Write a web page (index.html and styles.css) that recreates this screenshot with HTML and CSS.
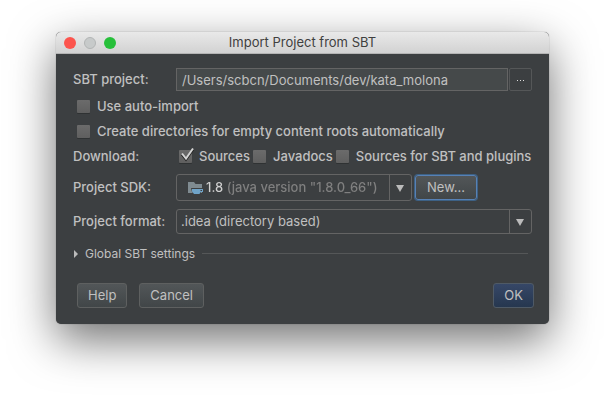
FILE: index.html
```html
<!DOCTYPE html>
<html lang="en">
<head>
    <meta charset="UTF-8">
    <meta name="viewport" content="width=device-width, initial-scale=1.0">
    <title>Import Project from SBT</title>
    <link rel="stylesheet" href="styles.css">
</head>
<body>
    <main class="dialog">
        <!-- Title bar -->
        <header class="titlebar">
            <div class="lights">
                <span class="light close"></span>
                <span class="light minimize"></span>
                <span class="light zoom"></span>
            </div>
            <h1>Import Project from SBT</h1>
        </header>

        <form class="content">
            <div class="row">
                <label class="name" for="project">SBT project:</label>
                <div class="path">
                    <input type="text" id="project" class="path-input" value="/Users/scbcn/Documents/dev/kata_molona">
                    <button type="button" class="browse" aria-label="Browse">
                        <svg width="9" height="3" viewBox="0 0 9 3"><path d="M1 2h1v1H1zM4 2h1v1H4zM7 2h1v1H7z" fill="#ddd"/></svg>
                    </button>
                </div>
            </div>

            <div class="options">
                <label class="check"><input type="checkbox">Use auto-import</label>
                <label class="check"><input type="checkbox">Create directories for empty content roots automatically</label>
            </div>

            <div class="row">
                <span class="name">Download:</span>
                <div class="downloads">
                    <label class="check">
                        <input type="checkbox" checked>Sources
                        <svg class="tick" width="16" height="16" viewBox="0 0 16 16">
                            <path d="M3 7.500l4 5L14 2.500" fill="none" stroke="#222" stroke-width="2.500"/>
                            <path d="M3 6.500l4 5L14 1.500" fill="none" stroke="#d4d4d4" stroke-width="2"/>
                        </svg>
                    </label>
                    <label class="check"><input type="checkbox">Javadocs</label>
                    <label class="check"><input type="checkbox">Sources for SBT and plugins</label>
                </div>
            </div>

            <div class="row sdk-row">
                <label class="name" for="sdk">Project SDK:</label>
                <div class="sdk">
                    <div class="combo">
                        <svg class="folder" width="16" height="14" viewBox="0 0 16 14">
                            <path d="M0 1h6l1.500 2H14v9H0z" fill="#7f8b91"/>
                            <path d="M3 7h13v4h-3l-1 2H6l-2-2z" fill="#3c3f41"/>
                            <path d="M4 8h11v3h-2.500l-1 2h-5.500L4 10.500zM12.500 9v1H14V9z" fill="#6fa4c9" fill-rule="evenodd"/>
                        </svg>
                        <select id="sdk" class="sdk-select">
                            <option>1.8 (java version "1.8.0_66")</option>
                        </select>
                        <svg class="arrow" width="8" height="7" viewBox="0 0 8 7"><path d="M0 0h8L4 7z" fill="#bbb"/></svg>
                    </div>
                    <button type="button" class="button focused">New...</button>
                </div>
            </div>

            <div class="row format-row">
                <label class="name" for="format">Project format:</label>
                <div class="combo">
                    <select id="format">
                        <option>.idea (directory based)</option>
                    </select>
                    <svg class="arrow" width="8" height="7" viewBox="0 0 8 7"><path d="M0 0h8L4 7z" fill="#bbb"/></svg>
                </div>
            </div>

            <button type="button" class="settings">
                <svg width="4" height="8" viewBox="0 0 4 8"><path d="M0 0l4 4-4 4z" fill="#bbb"/></svg>
                <span>Global SBT settings</span>
            </button>

            <!-- Bottom buttons -->
            <footer class="actions">
                <button type="button" class="button">Help</button>
                <button type="button" class="button">Cancel</button>
                <button type="submit" class="button primary">OK</button>
            </footer>
        </form>
    </main>
</body>
</html>
```
FILE: styles.css
```css
* {
    box-sizing: border-box;
}

body {
    min-height: 100vh;
    margin: 0;
    padding: 32px 56px;
    background: #fff;
    color: #c0c0c0;
    font-family: Inter, "Liberation Sans", sans-serif;
    font-size: 13px;
    line-height: 17px;
}

/* Window */
.dialog {
    border-radius: 5px;
    background: #3c3f41;
    box-shadow: 0 0 1px rgba(0, 0, 0, 0.5), 0 16px 46px rgba(0, 0, 0, 0.56);
}

.titlebar {
    position: relative;
    display: flex;
    align-items: center;
    justify-content: center;
    height: 22px;
    border-bottom: 1px solid #b4b4b4;
    border-radius: 5px 5px 0 0;
    background: linear-gradient(#e9e9e9, #d2d2d2);
}

.titlebar h1 {
    margin: 0;
    color: #404040;
    font-size: 13px;
    font-weight: 400;
}

.lights {
    position: absolute;
    top: 5px;
    left: 8px;
    display: flex;
    gap: 8px;
}

.light {
    width: 12px;
    height: 12px;
    border-radius: 50%;
}

.close {
    background: #fc544d;
}

.minimize {
    border: 1px solid #b2b5b5;
    background: #c7caca;
}

.zoom {
    background: #27c03a;
}

/* Form rows */
.content {
    display: flex;
    flex-direction: column;
    padding: 14px 17px 16px;
}

.row {
    display: grid;
    grid-template-columns: 103px 1fr;
    align-items: center;
}

.name {
    font-weight: 500;
    white-space: nowrap;
}

input,
select,
button {
    margin: 0;
    color: inherit;
    font: inherit;
}

.path {
    display: flex;
    gap: 1px;
}

.path-input {
    flex: 1;
    min-width: 0;
    height: 23px;
    padding: 0 5px;
    border: 1px solid #646464;
    outline: none;
    background: #45494a;
}

.browse {
    display: flex;
    align-items: center;
    justify-content: center;
    width: 23px;
    padding: 0;
    border: 1px solid #555758;
    border-radius: 2px;
    background: #3c3f41;
}

/* Check boxes */
.options {
    margin-top: 3px;
}

.check {
    position: relative;
    display: flex;
    align-items: center;
    gap: 7px;
    height: 25px;
    padding-left: 4px;
    font-weight: 500;
    white-space: nowrap;
}

.check input {
    flex: none;
    width: 13px;
    height: 13px;
    border-radius: 1px;
    appearance: none;
    background: linear-gradient(#6b6b6b, #5f5f5f);
    box-shadow: 0 1px 0 #2f3233;
}

.tick {
    position: absolute;
    top: 3px;
    left: 3px;
    pointer-events: none;
}

.downloads {
    display: flex;
}

.downloads .check {
    padding-left: 3px;
}

/* Drop-downs */
.sdk-row {
    margin-top: 5px;
}

.format-row {
    margin-top: 8px;
}

.sdk {
    display: flex;
    align-items: center;
    gap: 3px;
}

.combo {
    position: relative;
    display: flex;
    border: 1px solid #646464;
    border-radius: 3px;
}

.combo::after {
    content: "";
    position: absolute;
    top: 0;
    right: 21px;
    bottom: 0;
    border-left: 1px solid #646464;
}

.combo select {
    width: 100%;
    height: 23px;
    padding: 0 28px 0 4px;
    border: none;
    outline: none;
    appearance: none;
    background: transparent;
}

.combo .sdk-select {
    width: 234px;
    height: 25px;
    padding-left: 29px;
    background: linear-gradient(90deg, #d0d0d0 50px, #808080 50px);
    background-clip: text;
    font-weight: 500;
    -webkit-text-fill-color: transparent;
}

.arrow {
    position: absolute;
    top: 50%;
    right: 7px;
    margin-top: -3px;
    pointer-events: none;
}

.folder {
    position: absolute;
    top: 6px;
    left: 11px;
    pointer-events: none;
}

/* Buttons */
.button {
    height: 25px;
    padding: 0 10px;
    border: 1px solid #5e6060;
    border-radius: 3px;
    background: linear-gradient(#525658, #414648);
}

.focused {
    padding: 0 11px;
    border-color: #5781b5;
    outline: none;
    box-shadow: 0 0 0 1px #3d6185;
}

.primary {
    margin-left: auto;
    border-color: #4f5a66;
    background: linear-gradient(#364767, #26374f);
}

.settings {
    display: flex;
    align-items: center;
    margin-top: 11px;
    padding: 0 4px 0 1px;
    border: none;
    background: none;
    font-size: 12px;
}

.settings span {
    margin: 0 7px;
}

.settings::after {
    content: "";
    flex: 1;
    border-top: 1px solid #555758;
}

.actions {
    display: flex;
    gap: 12px;
    margin: 21px -2px 0 4px;
}
```
